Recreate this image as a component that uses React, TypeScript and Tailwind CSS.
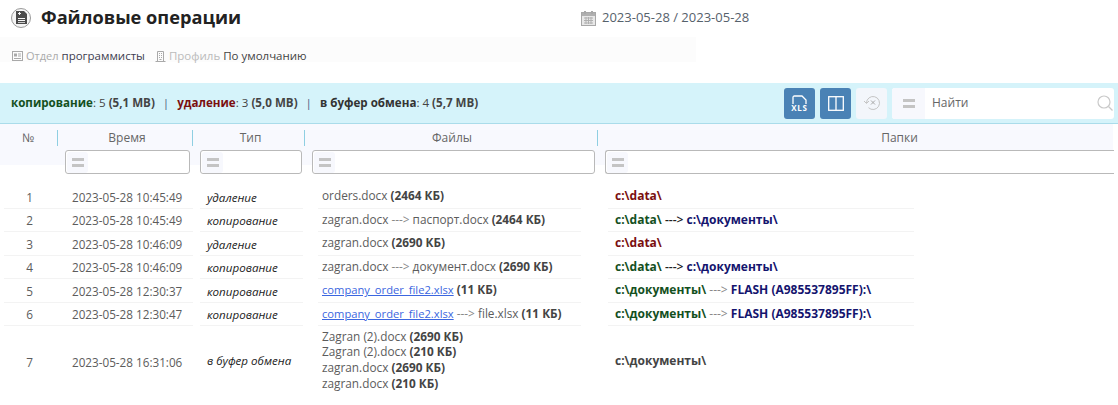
import type { ReactNode } from 'react';

const COLS = 'grid grid-cols-[58px_135px_112px_293px_515px]';

const Equals = () => (
  <span className="flex h-[21px] w-[21px] shrink-0 flex-col items-center justify-center gap-[3px] rounded-[3px] bg-[#f7f8fd]">
    <span className="h-[3px] w-[12px] bg-[#c4c4c4]" />
    <span className="h-[3px] w-[12px] bg-[#c4c4c4]" />
  </span>
);

const FilterInput = ({ className }: { className: string }) => (
  <div className={`flex h-[24px] items-center rounded-[3px] border border-[#b9b9b9] bg-white pl-[1px] ${className}`}>
    <Equals />
  </div>
);

const PageIcon = () => (
  <span className="flex h-[20px] w-[20px] items-center justify-center rounded-full border border-[#9a9a9a] bg-[#f5f5f5]">
    <svg width="11" height="13" viewBox="0 0 11 13">
      <path d="M0 0h8l3 3v10H0z" fill="#4a4a4a" />
      <path d="M2 7h7v1H2zM2 9h7v1H2zM2 11h7v.8H2z" fill="#f5f5f5" />
      <path d="M3 1h1v1h1v1H4v1H3V3H2V2h1z" fill="#f5f5f5" />
    </svg>
  </span>
);

const Calendar = () => (
  <svg width="15" height="16" viewBox="0 0 15 16" fill="none">
    <rect x="0.5" y="2.5" width="14" height="13" fill="#e8e8e8" stroke="#a8a8a8" />
    <rect x="1" y="3" width="13" height="3" fill="#b0b0b0" />
    <rect x="3" y="1" width="2" height="3" fill="#a8a8a8" />
    <rect x="10" y="1" width="2" height="3" fill="#a8a8a8" />
    <path d="M3 8h9M3 10.500h9M3 13h9M5 7v7M7.500 7v7M10 7v7" stroke="#b0b0b0" />
  </svg>
);

const Card = () => (
  <svg width="11" height="10" viewBox="0 0 11 10" fill="none" stroke="#a9a9a9">
    <rect x="0.5" y="0.5" width="10" height="9" />
    <rect x="2" y="2.500" width="3" height="3" fill="#a9a9a9" stroke="none" />
    <path d="M6 3h3M6 5h3M2 7.500h7" />
  </svg>
);

const Building = () => (
  <svg width="11" height="11" viewBox="0 0 11 11" fill="none" stroke="#a9a9a9">
    <path d="M2.500 10.500v-10h6v10M0.500 10.500h10" />
    <path d="M4 2.500h1M6 2.500h1M4 4.500h1M6 4.500h1M4 6.500h1M6 6.500h1M4.500 8.500h2" />
  </svg>
);

const Size = ({ children }: { children: ReactNode }) => (
  <b className="font-bold text-[#444]">{children}</b>
);
const Arrow = () => <span className="text-[#888]"> ---&gt; </span>;
const FileLink = () => <span className="text-[11.200px] text-[#3b66e0] underline">company_order_file2.xlsx</span>;

const Del = () => <b className="text-[#7a0f0f]">c:\data\</b>;
const Src = ({ children }: { children: ReactNode }) => <b className="text-[#14501e]">{children}</b>;
const Dst = ({ children }: { children: ReactNode }) => <b className="text-[#14146e]">{children}</b>;

const DirArrow = () => <span className="font-semibold text-[#222]"> ---&gt; </span>;

const rows = [
  {
    n: 1,
    time: '2023-05-28 10:45:49',
    type: 'удаление',
    files: <span>orders.docx <Size>(2464 КБ)</Size></span>,
    dirs: <Del />,
  },
  {
    n: 2,
    time: '2023-05-28 10:45:49',
    type: 'копирование',
    files: <span>zagran.docx<Arrow />паспорт.docx <Size>(2464 КБ)</Size></span>,
    dirs: <span><Src>c:\data\</Src><DirArrow /><Dst>c:\документы\</Dst></span>,
  },
  {
    n: 3,
    time: '2023-05-28 10:46:09',
    type: 'удаление',
    files: <span>zagran.docx <Size>(2690 КБ)</Size></span>,
    dirs: <Del />,
  },
  {
    n: 4,
    time: '2023-05-28 10:46:09',
    type: 'копирование',
    files: <span>zagran.docx<Arrow />документ.docx <Size>(2690 КБ)</Size></span>,
    dirs: <span><Src>c:\data\</Src><DirArrow /><Dst>c:\документы\</Dst></span>,
  },
  {
    n: 5,
    time: '2023-05-28 12:30:37',
    type: 'копирование',
    files: <span><FileLink /> <Size>(11 КБ)</Size></span>,
    dirs: <span><Src>c:\документы\</Src><Arrow /><Dst>FLASH (A985537895FF):\</Dst></span>,
  },
  {
    n: 6,
    time: '2023-05-28 12:30:47',
    type: 'копирование',
    files: <span><FileLink /><Arrow />file.xlsx <Size>(11 КБ)</Size></span>,
    dirs: <span><Src>c:\документы\</Src><Arrow /><Dst>FLASH (A985537895FF):\</Dst></span>,
  },
];

const App = () => {
  return (
    <div className="h-[405px] w-[1118px] overflow-hidden bg-white font-['Open_Sans',sans-serif] text-[11.800px] text-[#5c5c5c]">
      <div className="flex h-[37px] items-center pb-[2px]">
        <div className="flex w-[560px] items-center pl-[11px]">
          <PageIcon />
          <h1 className="ml-[10px] text-[18.200px] leading-none font-bold text-[#222]">Файловые операции</h1>
        </div>
        <div className="ml-[21px] flex items-center gap-[6px] text-[13px] text-[#56616b]">
          <Calendar />
          <span>2023-05-28 / 2023-05-28</span>
        </div>
      </div>

      <div className="flex h-[25px] w-[696px] items-center bg-[#fcfcfc] pt-[13px] pl-[12px] text-[11.500px]">
        <Card />
        <span className="ml-[3px] text-[11px] text-[#aaa]">Отдел</span>
        <span className="ml-[3px] text-[#3c3c50]">программисты</span>
        <span className="ml-[10px]"><Building /></span>
        <span className="ml-[3px] text-[#bbb]">Профиль</span>
        <span className="ml-[3px] text-[#444]">По умолчанию</span>
      </div>

      <div className="mt-[21px] flex h-[41px] items-center border-b border-[#aadcea] bg-[#d5f3fa] pr-[4px] pl-[11px]">
        <div className="flex items-center text-[11.600px] font-bold text-[#444]">
          <span><span className="text-[#14501e]">копирование</span><span className="font-normal">: 5 </span>(5,1 MB)</span>
          <span className="mx-[8px] font-normal text-[#4a5a80]">|</span>
          <span><span className="text-[#7a0f0f]">удаление</span><span className="font-normal">: 3 </span>(5,0 MB)</span>
          <span className="mx-[8px] font-normal text-[#4a5a80]">|</span>
          <span><span className="text-[#333]">в буфер обмена</span><span className="font-normal">: 4 </span>(5,7 MB)</span>
        </div>
        <div className="ml-auto flex items-center gap-[5px]">
          <button className="flex h-[31px] w-[31px] flex-col items-center justify-center rounded-[3px] bg-[#4a82b5] text-white">
            <svg width="15" height="9" viewBox="0 0 15 9" fill="none" stroke="white" strokeWidth="1.300">
              <path d="M1 9V2.500q0-1.500 1.500-1.500H10l4 4v4" />
            </svg>
            <span className="mt-[-1px] text-[8px] leading-[9px] font-bold tracking-[0.8px]">XLS</span>
          </button>
          <button className="flex h-[31px] w-[31px] items-center justify-center rounded-[3px] bg-[#4a82b5]">
            <svg width="16" height="15" viewBox="0 0 16 15" fill="none" stroke="white" strokeWidth="1.300">
              <rect x="0.700" y="0.700" width="14.600" height="13.600" />
              <path d="M8 0.700v13.600" />
            </svg>
          </button>
          <button className="flex h-[31px] w-[31px] items-center justify-center rounded-[3px] bg-[#f3f6fb]">
            <svg width="18" height="16" viewBox="0 0 18 16" fill="none" stroke="#c4c4c4">
              <path d="M3.500 8a6.500 6.500 0 1 1 2 4.700" />
              <path d="M1 6l2.500 2.500L6 6" />
              <path d="M8 5.500l4 4M12 5.500l-4 4" stroke="#a8a8a8" />
            </svg>
          </button>
          <div className="flex h-[31px] w-[222px] items-center rounded-[3px] bg-white">
            <span className="flex h-[31px] w-[33px] items-center justify-center rounded-l-[3px] bg-[#f7f8fd]">
              <span className="flex flex-col gap-[3px]">
                <span className="h-[3px] w-[12px] bg-[#c4c4c4]" />
                <span className="h-[3px] w-[12px] bg-[#c4c4c4]" />
              </span>
            </span>
            <span className="ml-[7px] text-[12px] text-[#666]">Найти</span>
            <svg className="mr-[1px] ml-auto" width="16" height="16" viewBox="0 0 16 16" fill="none" stroke="#c9c9c9" strokeWidth="1.200">
              <circle cx="7" cy="7" r="6" />
              <path d="M11.500 11.500l4 4" />
            </svg>
          </div>
        </div>
      </div>

      <div className="h-[41px] w-[1113px] bg-[#f8f9fe]">
        <div className={`${COLS} pt-[6px] text-[12px] text-[#666]`}>
          <div className="h-[16px] border-r border-[#8fcfe2] pr-[1px] text-center leading-[16px]">№</div>
          <div className="h-[16px] border-r border-[#8fcfe2] pl-[4px] text-center leading-[16px]">Время</div>
          <div className="h-[16px] border-r border-[#8fcfe2] pl-[4px] text-center leading-[16px]">Тип</div>
          <div className="h-[16px] border-r border-[#8fcfe2] pl-[2px] text-center leading-[16px]">Файлы</div>
          <div className="h-[16px] pl-[88px] text-center leading-[16px]">Папки</div>
        </div>
      </div>
      <div className={`${COLS} -mt-[15px] h-[24px]`}>
        <div />
        <div className="pl-[7px]"><FilterInput className="w-[125px]" /></div>
        <div className="pl-[7px]"><FilterInput className="w-[102px]" /></div>
        <div className="pl-[7px]"><FilterInput className="w-[283px]" /></div>
        <div className="pl-[7px]"><FilterInput className="w-[509px] rounded-r-none border-r-0" /></div>
      </div>

      <div className="mt-[11px]">
        {rows.map((r) => (
          <div key={r.n} className={`${COLS} h-[23.500px]`}>
            <div className="ml-[4px] flex items-center justify-center border-b border-[#f3f3f3] pt-[3px] pr-[3px]">{r.n}</div>
            <div className="flex items-center border-b border-[#f3f3f3] pt-[3px] pl-[14px] text-[11.700px]">{r.time}</div>
            <div className="mr-[2px] ml-[7px] flex items-center border-b border-[#f3f3f3] pt-[2px] pl-[7px] text-[11.600px] text-[#222] italic">{r.type}</div>
            <div className="mr-[17px] ml-[13px] flex items-center border-b border-[#f3f3f3] pl-[4px] whitespace-pre">{r.files}</div>
            <div className="mr-[199px] ml-[10px] flex items-center border-b border-[#f3f3f3] pl-[7px] text-[12px] whitespace-pre">{r.dirs}</div>
          </div>
        ))}
        <div className={`${COLS} h-[68px]`}>
          <div className="ml-[4px] flex items-center justify-center pt-[5px] pr-[3px]">7</div>
          <div className="flex items-center pt-[5px] pl-[14px] text-[11.700px]">2023-05-28 16:31:06</div>
          <div className="ml-[7px] flex items-center pt-[2px] pl-[7px] text-[11.600px] text-[#222] italic">в буфер обмена</div>
          <div className="ml-[13px] flex flex-col justify-center pl-[4px] leading-[15.700px]">
            <span>Zagran (2).docx <Size>(2690 КБ)</Size></span>
            <span>Zagran (2).docx <Size>(210 КБ)</Size></span>
            <span>zagran.docx <Size>(2690 КБ)</Size></span>
            <span>zagran.docx <Size>(210 КБ)</Size></span>
          </div>
          <div className="ml-[10px] flex items-center pt-[2px] pl-[7px] text-[12px] font-bold text-[#444]">c:\документы\</div>
        </div>
      </div>
    </div>
  );
};

export default App;
